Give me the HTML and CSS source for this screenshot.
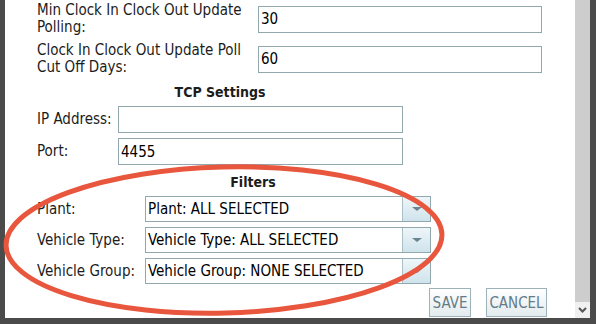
FILE: index.html
```html
<!DOCTYPE html>
<html lang="en">
<head>
    <meta charset="UTF-8">
    <meta name="viewport" content="width=device-width, initial-scale=1.0">
    <title>Device Settings</title>
    <link rel="stylesheet" href="styles.css">
</head>
<body>
    <div class="window">
        <div class="pane">
            <div class="content">
                <div class="form-grid general-grid">
                    <label>Min Clock In Clock Out Update Polling:</label>
                    <input type="text" value="30">
                    <label>Clock In Clock Out Update Poll Cut Off Days:</label>
                    <input type="text" value="60">
                </div>

                <h3 class="section-title tcp-title">TCP Settings</h3>
                <div class="form-grid tcp-grid">
                    <label>IP Address:</label>
                    <input type="text" value="">
                    <label>Port:</label>
                    <input type="text" value="4455">
                </div>

                <h3 class="section-title filters-title">Filters</h3>
                <div class="form-grid filter-grid">
                    <label>Plant:</label>
                    <div class="dropdown">
                        <span class="dropdown-text">Plant: ALL SELECTED</span>
                        <span class="dropdown-button"><span class="arrow"></span></span>
                    </div>
                    <label>Vehicle Type:</label>
                    <div class="dropdown">
                        <span class="dropdown-text">Vehicle Type: ALL SELECTED</span>
                        <span class="dropdown-button"><span class="arrow"></span></span>
                    </div>
                    <label>Vehicle Group:</label>
                    <div class="dropdown">
                        <span class="dropdown-text">Vehicle Group: NONE SELECTED</span>
                        <span class="dropdown-button"><span class="arrow"></span></span>
                    </div>
                </div>

                <div class="actions">
                    <button class="btn btn-save">SAVE</button>
                    <button class="btn btn-cancel">CANCEL</button>
                </div>
            </div>
            <div class="scrollbar">
                <div class="scroll-track"></div>
                <div class="scroll-down">
                    <svg width="9" height="6" viewBox="0 0 9 6">
                        <path d="M1 1 L4.5 4.5 L8 1" fill="none" stroke="#555" stroke-width="2"/>
                    </svg>
                </div>
            </div>
        </div>
        <!-- hand drawn highlight round the filters -->
        <svg class="annotation" width="596" height="324" viewBox="0 0 596 324">
            <ellipse cx="224" cy="240" rx="218" ry="73" transform="rotate(-1.5 224 240)"
                     fill="none" stroke="#e8563d" stroke-width="5"/>
        </svg>
    </div>
</body>
</html>
```

FILE: styles.css
```css
body {
    margin: 0;
    font-family: "DejaVu Sans Condensed", "DejaVu Sans", sans-serif;
    font-stretch: condensed;
    font-size: 15px;
    color: #1c1c1c;
}
.window {
    position: relative;
    width: 596px;
    height: 324px;
    box-sizing: border-box;
    padding: 0 6px 6px 5px;
    background-color: #4b4b4b;
    overflow: hidden;
}
.pane {
    display: flex;
    height: 318px;
    background-color: white;
}
.content {
    flex: 1;
    padding: 2px 0 0 32px;
    overflow: hidden;
}
.form-grid {
    display: grid;
    align-items: center;
}
.form-grid label {
    line-height: 17px;
}
.general-grid {
    grid-template-columns: 221px 284px;
    row-gap: 6px;
}
.general-grid label {
    padding-right: 6px;
}
.tcp-grid {
    grid-template-columns: 81px 285px;
    row-gap: 5px;
}
.filter-grid {
    grid-template-columns: 108px 286px;
    row-gap: 5px;
}
input {
    height: 27px;
    box-sizing: border-box;
    border: 1px solid #91a8ae;
    padding: 0 2px;
    font-family: inherit;
    font-stretch: condensed;
    font-size: 15px;
    color: black;
}
.section-title {
    margin: 0;
    font-size: 14px;
    font-weight: bold;
    line-height: 17px;
    text-align: center;
}
.tcp-title {
    width: 366px;
    margin: 8px 0 5px;
}
.filters-title {
    width: 432px;
    margin: 9px 0 5px;
}
.dropdown {
    display: flex;
    height: 26px;
    box-sizing: border-box;
    border: 1px solid #91a8ae;
}
.dropdown-text {
    flex: 1;
    padding-left: 2px;
    line-height: 24px;
    color: black;
}
.dropdown-button {
    display: flex;
    align-items: center;
    justify-content: center;
    width: 27px;
    border-left: 1px solid #a9c0c7;
    background: linear-gradient(#eef6f9, #cfe3ec);
}
.arrow {
    width: 0;
    height: 0;
    border-left: 5px solid transparent;
    border-right: 5px solid transparent;
    border-top: 4px solid #6b8590;
}
.actions {
    display: flex;
    justify-content: flex-end;
    gap: 15px;
    margin-top: 4px;
    padding-right: 28px;
}
.btn {
    height: 29px;
    padding: 0;
    border: 1px solid #9cb1b8;
    background: linear-gradient(#ffffff, #e3ebee);
    font-family: inherit;
    font-stretch: condensed;
    font-size: 15px;
    color: #647b88;
}
.btn-save {
    width: 42px;
}
.btn-cancel {
    width: 61px;
}
.scrollbar {
    display: flex;
    flex-direction: column;
    width: 15px;
    background-color: #cdcdcd;
}
.scroll-track {
    flex: 1;
}
.scroll-down {
    display: flex;
    align-items: center;
    justify-content: center;
    height: 16px;
    background-color: #f0f0f0;
}
.annotation {
    position: absolute;
    left: 0;
    top: 0;
    pointer-events: none;
}
```
